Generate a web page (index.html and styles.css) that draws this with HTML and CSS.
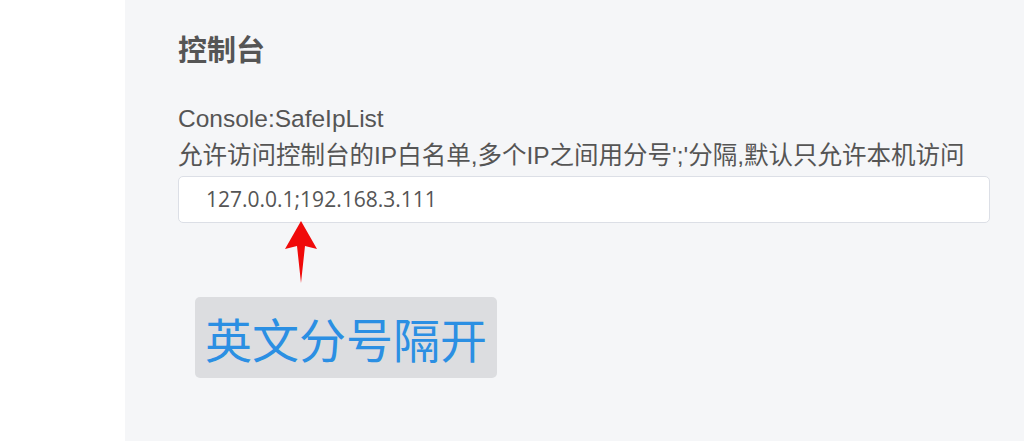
FILE: index.html
```html
<!DOCTYPE html>
<html lang="zh-CN">
<head>
<meta charset="utf-8">
<link rel="stylesheet" href="styles.css">
</head>
<body>
<div class="layout">
  <aside class="side"></aside>
  <main class="panel">
    <h2 class="title">控制台</h2>
    <div class="field">
      <div class="key">Console:SafeIpList</div>
      <div class="desc">允许访问控制台的IP白名单,多个IP之间用分号';'分隔,默认只允许本机访问</div>
      <div class="input">127.0.0.1;192.168.3.111</div>
      <div class="annot">
        <svg class="arrow" width="40" height="66" viewBox="0 0 40 66">
          <path d="M20 0 L36 28 L24 25 L20 62 L16 25 L4 28 Z" fill="#f00a0a"/>
        </svg>
        <div class="callout">英文分号隔开</div>
      </div>
    </div>
  </main>
</div>
</body>
</html>
```
FILE: styles.css
```css
html, body {
  margin: 0;
  padding: 0;
  height: 100%;
}
body {
  font-family: "Liberation Sans", "Noto Sans CJK SC", sans-serif;
  color: #555;
  background: #fff;
}
.layout {
  display: flex;
  height: 441px;
}
.side {
  width: 125px;
  background: #fff;
  flex: none;
}
.panel {
  flex: 1;
  background: #f5f6f8;
  padding: 30px 34px 0 53px;
}
.title {
  margin: 0;
  font-size: 29px;
  font-weight: 700;
  line-height: 36px;
  color: #555;
  font-family: "Noto Sans CJK SC", sans-serif;
}
.field {
  margin-top: 35px;
}
.key {
  font-size: 24.5px;
  line-height: 36px;
}
.desc {
  font-size: 24.5px;
  line-height: 38px;
  white-space: nowrap;
}
.input {
  margin-top: 1px;
  height: 47px;
  box-sizing: border-box;
  border: 1px solid #dcdfe6;
  border-radius: 5px;
  background: #fff;
  padding: 0 27px;
  font-family: "Open Sans", "Noto Sans CJK SC", sans-serif;
  font-size: 21px;
  line-height: 45px;
  color: #555;
}
.annot {
  position: relative;
  height: 160px;
}
.arrow {
  position: absolute;
  left: 103px;
  top: -2px;
}
.callout {
  position: absolute;
  left: 17px;
  top: 74px;
  width: 302px;
  height: 81px;
  box-sizing: border-box;
  background: #dcdde0;
  border-radius: 5px;
  color: #2b8fe3;
  font-family: "Noto Sans CJK SC", sans-serif;
  font-size: 47px;
  line-height: 81px;
  text-align: center;
}
```
